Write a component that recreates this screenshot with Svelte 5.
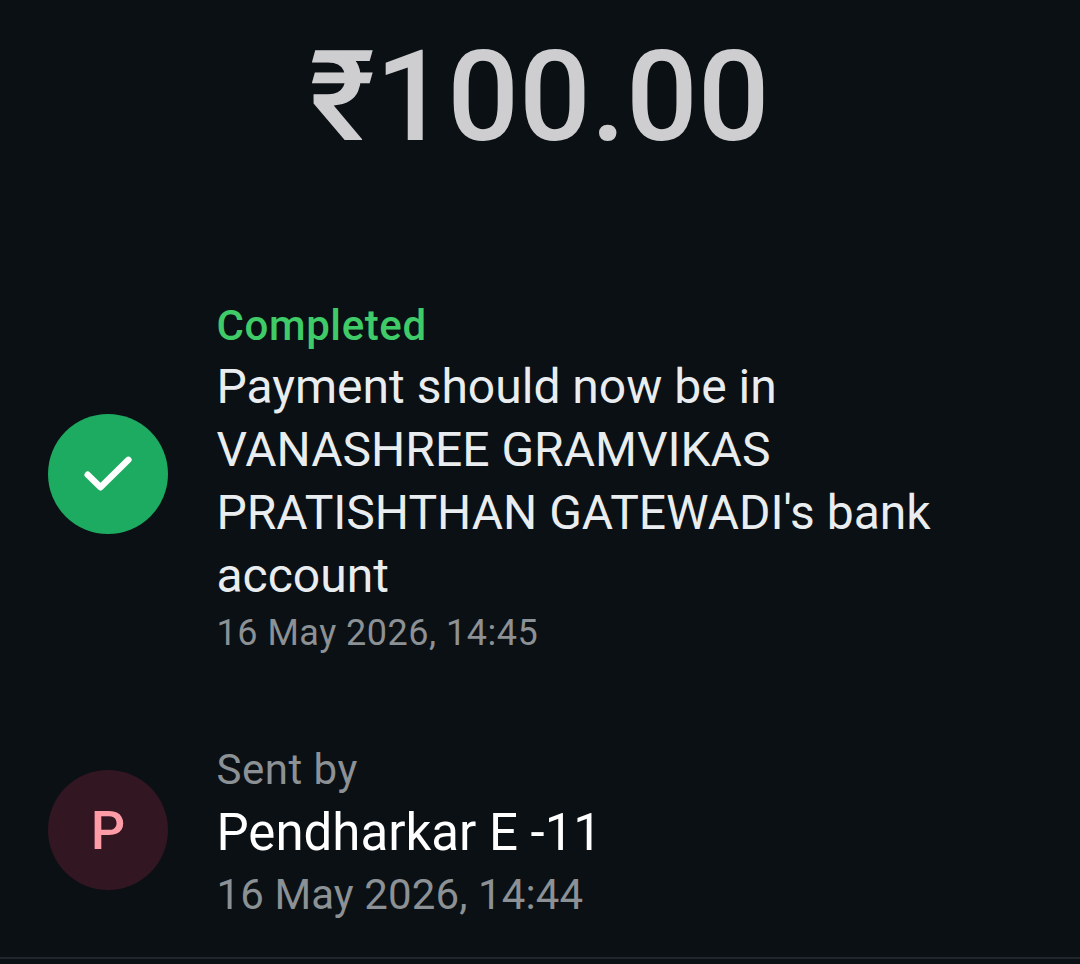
<script lang="ts">
  const amount = "₹100.00";

  const status = {
    label: "Completed",
    lines: [
      "Payment should now be in",
      "VANASHREE GRAMVIKAS",
      "PRATISHTHAN GATEWADI's bank",
      "account"
    ],
    time: "16 May 2026, 14:45"
  };

  const sender = {
    label: "Sent by",
    name: "Pendharkar E -11",
    time: "16 May 2026, 14:44"
  };
</script>

<main class="payment">
  <h1 class="amount">{amount}</h1>

  <section class="row status">
    <div class="avatar done">
      <svg viewBox="0 0 120 120" aria-hidden="true">
        <path d="M39.700 60.700 L52.500 73.300 L80.400 45.800" />
      </svg>
    </div>
    <div class="details">
      <p class="status-label">{status.label}</p>
      <p class="message">
        {#each status.lines as line}
          <span>{line}</span>
        {/each}
      </p>
      <p class="status-time">{status.time}</p>
    </div>
  </section>

  <section class="row sender">
    <div class="avatar initial">{sender.name[0]}</div>
    <div class="details">
      <p class="sender-label">{sender.label}</p>
      <p class="sender-name">{sender.name}</p>
      <p class="sender-time">{sender.time}</p>
    </div>
  </section>
</main>

<style>
  :global(body) {
    background: #0b1014;
  }

  .payment {
    box-sizing: border-box;
    height: 964px;
    overflow: hidden;
    font-family: Roboto, sans-serif;
    background: #0b1014;
    white-space: nowrap;
  }

  .amount {
    margin: 0;
    padding: 22px 1px 0 0;
    height: 148px;
    line-height: 150px;
    font-size: 126.4px;
    font-weight: 500;
    text-align: center;
    color: #ceced0;
  }

  .row {
    display: flex;
    align-items: flex-start;
    gap: 48.5px;
    padding-left: 48px;
  }

  .status {
    margin-top: 126px;
    height: 363px;
  }

  .sender {
    margin-top: 81px;
    height: 184px;
    padding-bottom: 33px;
    border-bottom: 2px solid #20262b;
  }

  .avatar {
    flex: none;
    width: 120px;
    height: 120px;
    border-radius: 50%;
  }

  .done {
    margin-top: 118.4px;
    background: #1daa61;
  }

  .done svg {
    display: block;
    fill: none;
    stroke: #fff;
    stroke-width: 6.4;
    stroke-linecap: round;
    stroke-linejoin: round;
  }

  .initial {
    margin-top: 29.5px;
    background: #321622;
    color: #fd9ba6;
    font-size: 54px;
    font-weight: 500;
    line-height: 122px;
    text-align: center;
  }

  p {
    margin: 0;
  }

  .status-label {
    font-size: 42px;
    font-weight: 500;
    line-height: 59px;
    letter-spacing: 0.6px;
    color: #3fcb68;
  }

  .message {
    font-size: 48px;
    line-height: 63px;
    color: #e9edef;
  }

  .message span {
    display: block;
  }

  .status-time {
    font-size: 36px;
    line-height: 52px;
    letter-spacing: 0.5px;
    color: #8b9194;
  }

  .sender-label {
    font-size: 42px;
    line-height: 60px;
    letter-spacing: 0.5px;
    color: #8b9194;
  }

  .sender-name {
    font-size: 51px;
    line-height: 66px;
    color: #fff;
  }

  .sender-time {
    font-size: 42px;
    line-height: 58px;
    letter-spacing: 0.1px;
    color: #8b9194;
  }
</style>
